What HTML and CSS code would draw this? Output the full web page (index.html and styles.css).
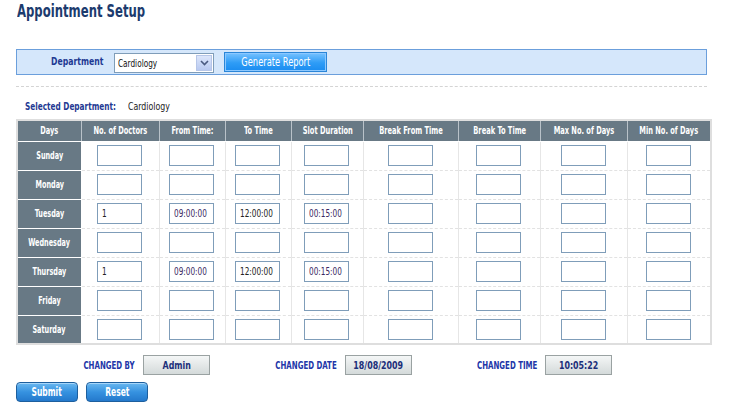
FILE: index.html
```html
<!DOCTYPE html>
<html>
<head>
<meta charset="utf-8">
<link rel="stylesheet" href="styles.css">
</head>
<body>
<div class="page">
  <h1 class="title"><span class="sq sq-left">Appointment Setup</span></h1>
  <div class="deptbar">
    <span class="dept-label"><span class="sq sq-left">Department</span></span>
    <div class="select">
      <span class="select-text"><span class="sq sq-left">Cardiology</span></span>
      <span class="select-arrow"><svg width="9" height="6" viewBox="0 0 9 6"><path d="M1 1 L4.5 4.5 L8 1" fill="none" stroke="#4a5a80" stroke-width="1.6"/></svg></span>
    </div>
    <button class="btn-gen"><span class="sq">Generate Report</span></button>
  </div>
  <div class="divider"></div>
  <div class="selected">
    <span class="sel-label"><span class="sq sq-left">Selected Department:</span></span>
    <span class="sel-value"><span class="sq sq-left">Cardiology</span></span>
  </div>
  <table class="grid">
    <colgroup>
      <col class="c-days"><col class="c-doc"><col class="c-from"><col class="c-to"><col class="c-slot"><col class="c-bfrom"><col class="c-bto"><col class="c-max"><col class="c-min">
    </colgroup>
    <thead>
      <tr>
        <th><span class="sq">Days</span></th><th><span class="sq">No. of Doctors</span></th><th><span class="sq">From Time:</span></th><th><span class="sq">To Time</span></th><th><span class="sq">Slot Duration</span></th><th><span class="sq">Break From Time</span></th><th><span class="sq">Break To Time</span></th><th><span class="sq">Max No. of Days</span></th><th><span class="sq">Min No. of Days</span></th>
      </tr>
    </thead>
    <tbody>
      <tr><td class="day"><span class="sq">Sunday</span></td><td><div class="box"></div></td><td><div class="box"></div></td><td><div class="box"></div></td><td><div class="box"></div></td><td><div class="box"></div></td><td><div class="box"></div></td><td><div class="box"></div></td><td><div class="box"></div></td></tr>
      <tr><td class="day"><span class="sq">Monday</span></td><td><div class="box"></div></td><td><div class="box"></div></td><td><div class="box"></div></td><td><div class="box"></div></td><td><div class="box"></div></td><td><div class="box"></div></td><td><div class="box"></div></td><td><div class="box"></div></td></tr>
      <tr><td class="day"><span class="sq">Tuesday</span></td><td><div class="box"><span class="sq sq-left">1</span></div></td><td><div class="box time"><span class="sq sq-left">09:00:00</span></div></td><td><div class="box"><span class="sq sq-left">12:00:00</span></div></td><td><div class="box time"><span class="sq sq-left">00:15:00</span></div></td><td><div class="box"></div></td><td><div class="box"></div></td><td><div class="box"></div></td><td><div class="box"></div></td></tr>
      <tr><td class="day"><span class="sq">Wednesday</span></td><td><div class="box"></div></td><td><div class="box"></div></td><td><div class="box"></div></td><td><div class="box"></div></td><td><div class="box"></div></td><td><div class="box"></div></td><td><div class="box"></div></td><td><div class="box"></div></td></tr>
      <tr><td class="day"><span class="sq">Thursday</span></td><td><div class="box"><span class="sq sq-left">1</span></div></td><td><div class="box time"><span class="sq sq-left">09:00:00</span></div></td><td><div class="box"><span class="sq sq-left">12:00:00</span></div></td><td><div class="box time"><span class="sq sq-left">00:15:00</span></div></td><td><div class="box"></div></td><td><div class="box"></div></td><td><div class="box"></div></td><td><div class="box"></div></td></tr>
      <tr><td class="day"><span class="sq">Friday</span></td><td><div class="box"></div></td><td><div class="box"></div></td><td><div class="box"></div></td><td><div class="box"></div></td><td><div class="box"></div></td><td><div class="box"></div></td><td><div class="box"></div></td><td><div class="box"></div></td></tr>
      <tr><td class="day"><span class="sq">Saturday</span></td><td><div class="box"></div></td><td><div class="box"></div></td><td><div class="box"></div></td><td><div class="box"></div></td><td><div class="box"></div></td><td><div class="box"></div></td><td><div class="box"></div></td><td><div class="box"></div></td></tr>
    </tbody>
  </table>
  <div class="info">
    <span class="info-label l1"><span class="sq sq-right">CHANGED BY</span></span>
    <span class="info-box"><span class="sq">Admin</span></span>
    <span class="info-label l2"><span class="sq sq-right">CHANGED DATE</span></span>
    <span class="info-box"><span class="sq">18/08/2009</span></span>
    <span class="info-label l3"><span class="sq sq-right">CHANGED TIME</span></span>
    <span class="info-box"><span class="sq">10:05:22</span></span>
  </div>
  <div class="actions">
    <button class="btn"><span class="sq">Submit</span></button>
    <button class="btn"><span class="sq">Reset</span></button>
  </div>
</div>
</body>
</html>
```

FILE: styles.css
```css
* { box-sizing: border-box; }
html, body { margin: 0; padding: 0; background: #ffffff; }
body {
  font-family: "DejaVu Sans Condensed", "DejaVu Sans", sans-serif;
  color: #222;
}
.sq {
  display: inline-block;
  white-space: nowrap;
  transform: scaleX(0.74);
  transform-origin: center;
}
.sq-left { transform-origin: left center; }
.sq-right { transform-origin: right center; }
.page { padding: 0 20px 0 16px; width: 732px; }
.title {
  margin: 0 0 0 1px;
  font-size: 18px;
  line-height: 22px;
  font-weight: bold;
  color: #1c3b6e;
}
.title .sq { transform: scaleX(0.72); }
.deptbar {
  margin-top: 27px;
  width: 691px;
  height: 26px;
  background: #d5e7fb;
  border: 1px solid #6b9fdc;
  display: flex;
  align-items: center;
  padding-left: 34px;
}
.dept-label {
  font-size: 11px;
  font-weight: bold;
  color: #1f3a93;
  width: 63px;
  margin-top: -2px;
}
.dept-label .sq { transform: scaleX(0.78); }
.select {
  width: 100px;
  height: 20px;
  background: #fff;
  border: 1px solid #7f9db9;
  display: flex;
  align-items: center;
  justify-content: space-between;
  padding: 1px;
  margin-top: 2px;
  overflow: hidden;
}
.select-text { font-size: 11px; color: #111; padding-left: 2px; width: 70px; }
.select-arrow {
  width: 16px;
  height: 16px;
  flex: none;
  background: linear-gradient(#dce6fb, #b9c9f0);
  border: 1px solid #b6c6e8;
  display: flex;
  align-items: center;
  justify-content: center;
}
.btn-gen {
  margin-left: 10px;
  width: 103px;
  height: 20px;
  border: 1px solid #2a86d8;
  box-shadow: inset 0 0 0 1px #8cc8ff;
  background: linear-gradient(#76c2ff, #2e9cf6 55%, #1a8cf0);
  color: #fff;
  font-family: inherit;
  font-size: 12px;
  padding: 0;
  overflow: hidden;
}
.btn-gen .sq { transform: scaleX(0.77); }
.divider {
  margin-top: 11px;
  width: 691px;
  border-top: 1px dashed #d4d4d4;
}
.selected {
  margin-top: 11px;
  padding-left: 9px;
  height: 16px;
  display: flex;
  align-items: center;
  font-size: 11px;
}
.sel-label { font-weight: bold; color: #1f3a93; width: 103px; }
.sel-value { color: #222; }
.sel-value .sq { transform: scaleX(0.79); }
.grid {
  margin-top: 5px;
  border-collapse: collapse;
  border: 2px solid #dedede;
  table-layout: fixed;
  width: 696px;
}
.c-days { width: 64px; }
.c-doc { width: 78px; }
.c-from { width: 66px; }
.c-to { width: 66px; }
.c-slot { width: 72px; }
.c-bfrom { width: 94px; }
.c-bto { width: 82px; }
.c-max { width: 87px; }
.c-min { width: 83px; }
.grid th {
  background: #687985;
  color: #fff;
  font-size: 10px;
  font-weight: bold;
  height: 21px;
  padding: 0;
  border-left: 1px solid #b9c2c9;
  border-bottom: 1px solid #ffffff;
  overflow: visible;
}
.grid th:first-child { border-left: none; }
.grid td {
  height: 29px;
  padding: 0;
  text-align: center;
  border-left: 1px solid #e6e6e6;
  border-bottom: 1px dashed #e2e2e2;
}
.grid td.day {
  background: #687985;
  color: #fff;
  font-size: 10px;
  font-weight: bold;
  border-left: none;
  border-right: 1px solid #fff;
  border-bottom: 1px solid #fff;
}
.grid td.day .sq { transform: scaleX(0.72); }
.grid tr:last-child td { border-bottom: none; }
.box {
  width: 45px;
  height: 21px;
  border: 1px solid #7f9db9;
  background: #fff;
  font-size: 11px;
  color: #222;
  padding: 0 0 0 4px;
  margin: 0 auto;
  display: flex;
  align-items: center;
  text-align: left;
  position: relative;
  left: -1px;
  overflow: hidden;
}
.box .sq { width: 50px; }
.time { color: #3b2a63; }
.info {
  margin-top: 10px;
  display: flex;
  align-items: center;
  height: 20px;
  font-size: 10px;
}
.info-label {
  font-weight: bold;
  color: #2236a8;
  margin-right: 8px;
  text-align: right;
  white-space: nowrap;
}
.info-label .sq { transform: scaleX(0.78); }
.l1 { width: 119px; }
.l2 { width: 127px; }
.l3 { width: 125px; }
.info-box {
  width: 67px;
  height: 20px;
  border: 1px solid #9aa2a2;
  background: linear-gradient(#f4f6f6, #d4dada);
  display: flex;
  align-items: center;
  justify-content: center;
  font-weight: bold;
  color: #1c2f7a;
  font-size: 11px;
}
.info-box .sq { transform: scaleX(0.8); }
.actions {
  margin-top: 7px;
  display: flex;
  gap: 8px;
}
.btn {
  width: 62px;
  height: 20px;
  border: 1px solid #1d5f9e;
  border-radius: 4px;
  background: linear-gradient(#6ab8f0, #3692e0 50%, #2479cc);
  box-shadow: inset 0 1px 0 #a6d6fa;
  color: #fff;
  font-family: inherit;
  font-weight: bold;
  font-size: 12px;
  padding: 0;
}
.btn .sq { transform: scaleX(0.7); }
```
